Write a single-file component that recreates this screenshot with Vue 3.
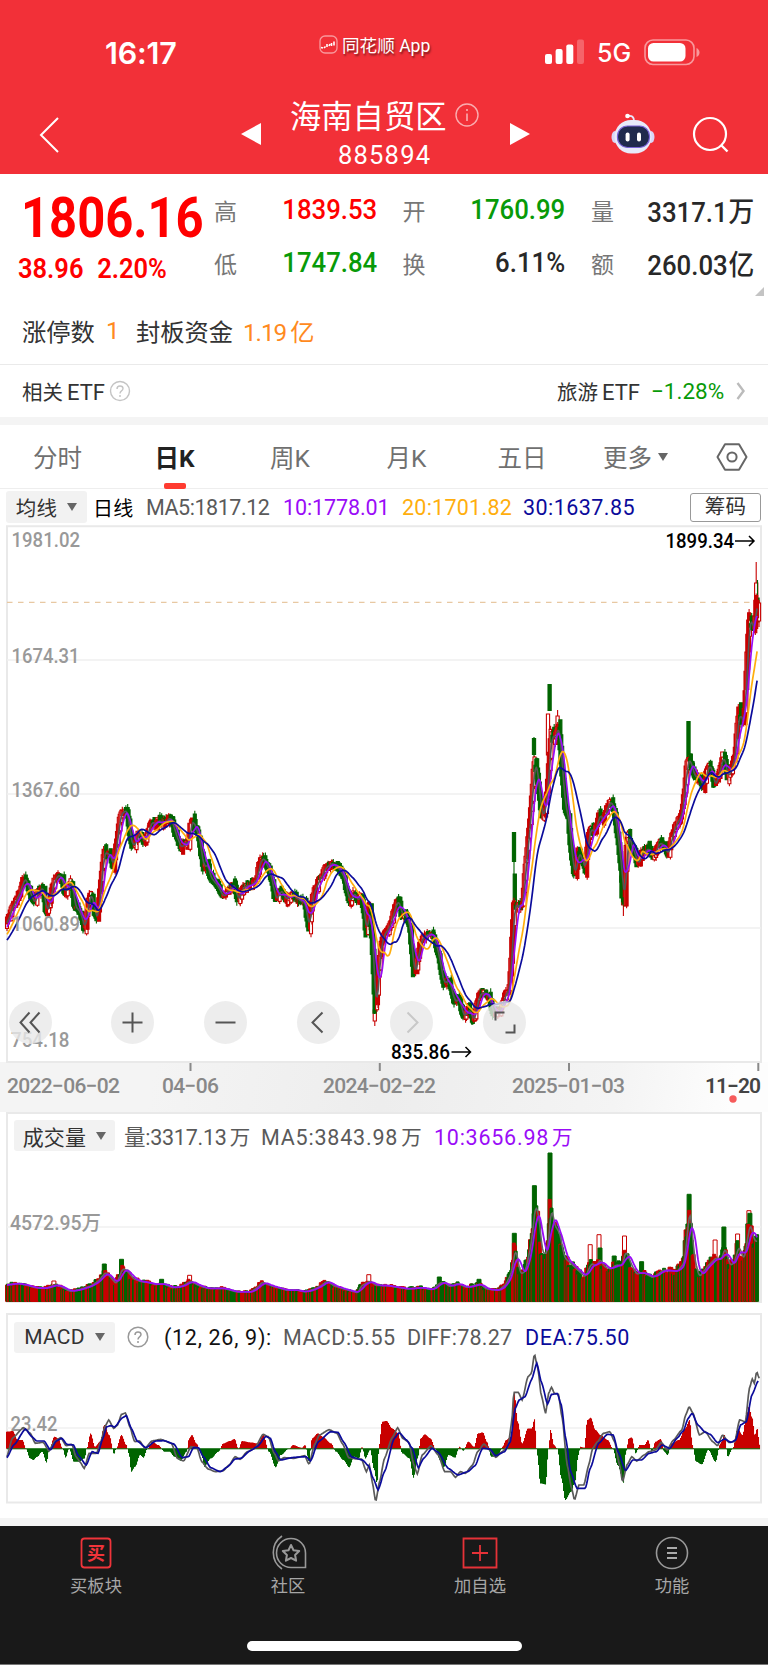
<template>
  <div class="page">
    <header class="header">
      <div class="status-bar">
        <span class="clock">16:17</span>
        <span class="app-mark">
          <svg width="19" height="19" viewBox="0 0 19 19">
            <rect x="1" y="1" width="17" height="17" rx="5" fill="none" stroke="#fff" stroke-opacity=".5" stroke-width="1.3" />
            <path d="M2 12.500l2 .5M5 13l1.500-1.500M8 9v3M10 11l1-2M12.500 8v3M15 6.500v4" fill="none" stroke="#fff" stroke-width="1.600" />
          </svg>
          <span>同花顺 App</span>
        </span>
        <span class="network">
          <svg width="40" height="26" viewBox="0 0 40 26" fill="#fff">
            <rect x="0" y="15" width="7" height="10" rx="2" />
            <rect x="10.600" y="10" width="7" height="15" rx="2" />
            <rect x="21.300" y="5.500" width="7" height="19.500" rx="2" />
            <rect x="32" y="0.500" width="7" height="24.500" rx="2" opacity=".25" />
          </svg>
          <b>5G</b>
          <svg width="56" height="27" viewBox="0 0 56 27">
            <rect x="1" y="1" width="49" height="24.500" rx="8" fill="none" stroke="#fff" stroke-opacity=".5" stroke-width="1.600" />
            <rect x="4" y="4" width="37.500" height="18.500" rx="5.500" fill="#fff" />
            <path d="M52.500 9v9q3-1.500 3-4.500t-3-4.500z" fill="#fff" fill-opacity=".5" />
          </svg>
        </span>
      </div>
      <nav class="title-bar">
        <svg class="back" width="20" height="38" viewBox="0 0 20 38">
          <path d="M19 2L2 19l17 17" fill="none" stroke="#fff" stroke-width="2" />
        </svg>
        <svg class="prev" width="20" height="22" viewBox="0 0 20 22"><path d="M0 11L20 0v22z" fill="#fff" /></svg>
        <div class="title">
          <div class="title-name">
            海南自贸区
            <svg width="24" height="24" viewBox="0 0 24 24">
              <circle cx="12" cy="12" r="11" fill="none" stroke="#fff" stroke-opacity=".6" stroke-width="1.400" />
              <path d="M12 6v2M12 10.500v7.500" stroke="#fff" stroke-opacity=".6" stroke-width="1.600" />
            </svg>
          </div>
          <div class="title-code">885894</div>
        </div>
        <svg class="next" width="20" height="22" viewBox="0 0 20 22"><path d="M20 11L0 0v22z" fill="#fff" /></svg>
        <svg class="robot" width="44" height="42" viewBox="0 0 44 42">
          <path d="M17 3q6-1 6 5" fill="none" stroke="#e9e6fb" stroke-width="1.800" />
          <circle cx="16.500" cy="3" r="2.300" fill="#fff" />
          <ellipse cx="4" cy="24" rx="3.500" ry="6" fill="#d9d6f7" />
          <ellipse cx="40" cy="24" rx="3.500" ry="6" fill="#d9d6f7" />
          <rect x="3.500" y="7" width="37" height="33.500" rx="16.500" fill="#e8eafa" />
          <rect x="6.500" y="13" width="32" height="21.500" rx="10" fill="#202a4d" stroke="#7a63d8" stroke-width="1.200" />
          <rect x="14.600" y="19.500" width="4" height="9" rx="2" fill="#fff" />
          <rect x="26" y="19.500" width="4" height="9" rx="2" fill="#fff" />
        </svg>
        <svg class="search" width="38" height="38" viewBox="0 0 38 38">
          <circle cx="18" cy="18" r="16" fill="none" stroke="#fff" stroke-width="2.200" />
          <path d="M29 29l6.500 6.500" stroke="#fff" stroke-width="2.400" />
        </svg>
      </nav>
    </header>

    <section class="quote">
      <div class="quote-main">
        <div class="price">1806.16</div>
        <div class="change"><span>38.96</span><span>2.20%</span></div>
      </div>
      <div class="quote-grid">
        <div v-for="item in quotes" :key="item.label" class="quote-item">
          <span class="quote-label">{{ item.label }}</span>
          <span :class="['quote-value', item.tone]">{{ item.value }}<i v-if="item.unit">{{ item.unit }}</i></span>
        </div>
      </div>
      <svg class="corner" width="9" height="9" viewBox="0 0 9 9"><path d="M9 0v9H0z" fill="#c4c4c4" /></svg>
      <div class="limit-line">
        <span>涨停数</span><em class="one">1</em><span class="fund">封板资金</span><em class="fund-value">1.19<i>亿</i></em>
      </div>
    </section>

    <section class="etf">
      <span>相关<b>ETF</b></span>
      <svg class="help" width="22" height="22" viewBox="0 0 22 22">
        <circle cx="11" cy="11" r="9.500" fill="none" stroke="#c4c4c4" stroke-width="1.400" />
        <path d="M8 9q0-3 3-3t3 2.600q0 1.300-1.500 2.300T11 13.500M11 15v2" fill="none" stroke="#c4c4c4" stroke-width="1.400" />
      </svg>
      <span class="etf-name">旅游<b>ETF</b></span>
      <span class="etf-rate">−1.28%</span>
      <svg width="10" height="18" viewBox="0 0 10 18"><path d="M1.500 1l6 8-6 8" fill="none" stroke="#bbb" stroke-width="2.400" /></svg>
    </section>

    <nav class="tabs">
      <span v-for="tab in tabs" :key="tab" :class="['tab', { active: tab === activeTab }]" @click="activeTab = tab">
        {{ tab }}<i v-if="tab === '更多'" class="caret"></i>
      </span>
      <svg class="setting" width="32" height="28" viewBox="0 0 32 28">
        <path d="M9 1.300h14L30.500 14 23 26.700H9L1.500 14z" fill="none" stroke="#666" stroke-width="2" stroke-linejoin="round" />
        <circle cx="16" cy="14" r="4.600" fill="none" stroke="#666" stroke-width="2" />
      </svg>
    </nav>

    <div class="ma-row">
      <span class="picker ma-picker">均线<i class="caret"></i></span>
      <span class="ma-day">日线</span>
      <span class="ma5">MA5:1817.12</span>
      <span class="ma10">10:1778.01</span>
      <span class="ma20">20:1701.82</span>
      <span class="ma30">30:1637.85</span>
      <span class="chips">筹码</span>
    </div>

    <section class="kline">
      <svg class="chart" width="768" height="537" viewBox="0 525 768 537">
        <path d="M7 526.300H761V1062H7z" fill="none" stroke="#e9e9e9" stroke-width="2" />
        <path d="M7 660H761M7 794H761M7 928H761" stroke="#f0f0f0" stroke-width="1.500" />
        <path d="M7 602.300H761" stroke="#e8c8a2" stroke-width="1.200" stroke-dasharray="5.500 5.500" />
        <g class="axis">
          <text x="11.500" y="546.500" textLength="68.500" lengthAdjust="spacingAndGlyphs">1981.02</text>
          <text x="11.500" y="662.500" textLength="68" lengthAdjust="spacingAndGlyphs">1674.31</text>
          <text x="11.500" y="796.800" textLength="68.500" lengthAdjust="spacingAndGlyphs">1367.60</text>
        </g>
        <g stroke-width="1.100">
          <path v-for="(c, i) in candles" :key="i" :d="c.d" :fill="c.fill" :stroke="c.stroke" />
        </g>
        <g fill="none" stroke-width="1.700" stroke-linejoin="round">
          <path :d="average(5)" stroke="#555" />
          <path :d="average(10)" stroke="#9a0cf7" />
          <path :d="average(20)" stroke="#ffae0d" />
          <path :d="average(30)" stroke="#0b0b9b" />
        </g>
        <g class="axis">
          <text x="11.500" y="931" textLength="68.500" lengthAdjust="spacingAndGlyphs">1060.89</text>
          <text x="11" y="1047" textLength="58.500" lengthAdjust="spacingAndGlyphs">754.18</text>
        </g>
        <g class="extreme">
          <text x="665.500" y="548" textLength="68.500" lengthAdjust="spacingAndGlyphs">1899.34</text>
          <text x="391" y="1059.300" textLength="59" lengthAdjust="spacingAndGlyphs">835.86</text>
          <path d="M735 541h19M749 536l5 5-5 5M451.500 1052h19M465.500 1047l5 5-5 5" fill="none" stroke="#000" stroke-width="1.500" />
        </g>
      </svg>
      <div class="tools">
        <span v-for="(tool, i) in tools" :key="i" class="tool">
          <svg width="43" height="43" viewBox="-21.500 -21.500 43 43"><path :d="tool.d" fill="none" :stroke="tool.color || '#555'" stroke-width="2" /></svg>
        </span>
      </div>
    </section>

    <div class="dates">
      <svg width="768" height="50" viewBox="0 1062 768 50">
        <path d="M190.500 1062v9M379.800 1062v9M569 1062v9M758.300 1062v9" stroke="#8a8a8a" stroke-width="2" />
        <text v-for="d in dates" :key="d.text" :x="d.x" y="1093.300" :textLength="d.w" :class="{ current: d.current }">{{ d.text }}</text>
        <circle cx="733" cy="1099" r="3.700" fill="#f65b5b" />
      </svg>
    </div>

    <section class="sub volume">
      <div class="sub-head">
        <span class="picker">成交量<i class="caret"></i></span>
        <span class="v0">量:3317.13<u>万</u></span>
        <span class="v5">MA5:3843.98<u>万</u></span>
        <span class="v10">10:3656.98<u>万</u></span>
      </div>
      <svg class="chart" width="768" height="191" viewBox="0 1112 768 191">
        <path d="M7 1113H761V1302H7z" fill="none" stroke="#e9e9e9" stroke-width="2" />
        <path d="M7 1227H761" stroke="#f0f0f0" stroke-width="1.500" />
        <text class="axis" x="10" y="1229.500" textLength="91" lengthAdjust="spacingAndGlyphs">4572.95万</text>
        <g stroke-width="1">
          <path v-for="(b, i) in volumeBars" :key="i" :d="b.d" :fill="b.fill" :stroke="b.stroke" />
        </g>
        <path :d="volumeAverage(4)" fill="none" stroke="#666" stroke-width="1.600" />
        <path :d="volumeAverage(9)" fill="none" stroke="#9a0cf7" stroke-width="1.800" />
      </svg>
    </section>

    <section class="sub macd">
      <div class="sub-head">
        <span class="picker">MACD<i class="caret"></i></span>
        <svg class="macd-help" width="22" height="22" viewBox="0 0 22 22">
          <circle cx="11" cy="11" r="9.800" fill="none" stroke="#999" stroke-width="1.500" />
          <path d="M8 9q0-3 3-3t3 2.600q0 1.300-1.500 2.300T11 13.500M11 15v2" fill="none" stroke="#999" stroke-width="1.500" />
        </svg>
        <span class="m0">(12, 26, 9):</span>
        <span class="m1">MACD:5.55</span>
        <span class="m2">DIFF:78.27</span>
        <span class="m3">DEA:75.50</span>
      </div>
      <svg class="chart" width="768" height="191" viewBox="0 1313 768 191">
        <path d="M7 1314H761V1502.500H7z" fill="none" stroke="#e9e9e9" stroke-width="2" />
        <path d="M7 1428H761" stroke="#f0f0f0" stroke-width="1.500" />
        <text class="axis" x="10.500" y="1430.500" textLength="47" lengthAdjust="spacingAndGlyphs">23.42</text>
        <path :d="histogram(1)" fill="#c80000" />
        <path :d="histogram(-1)" fill="#006400" />
        <path d="M7 1448.800H760" stroke="#006400" stroke-width="1" />
        <path :d="curve(diff)" fill="none" stroke="#5a5a5a" stroke-width="1.700" />
        <path :d="curve(dea)" fill="none" stroke="#0b0b9b" stroke-width="1.700" />
      </svg>
    </section>

    <footer class="footer">
      <div class="actions">
        <div class="action">
          <svg width="36" height="36" viewBox="-18 -18 36 36">
            <rect x="-14.500" y="-14.500" width="29" height="29" rx="3" fill="none" stroke="#f0343a" stroke-width="1.800" />
            <text x="0" y="6.500" text-anchor="middle" class="buy">买</text>
          </svg>
          <span>买板块</span>
        </div>
        <div class="action">
          <svg width="38" height="36" viewBox="-19 -18 38 36" fill="none" stroke="#999" stroke-width="1.600">
            <path d="M3 -14.500a14.500 14.500 0 0 0 0 29h14.500v-14.500A14.500 14.500 0 0 0 3 -14.500z" />
            <path d="M-6 -17a20 20 0 0 0 0 33" />
            <path d="M3 -8l2.500 5.200 5.700.8-4.100 4 1 5.700L3 5l-5.100 2.700 1-5.700-4.100-4 5.700-.8z" stroke-width="2" stroke-linejoin="round" />
          </svg>
          <span>社区</span>
        </div>
        <div class="action">
          <svg width="36" height="36" viewBox="-18 -18 36 36">
            <path d="M-16.500 -14.500h33v29h-33zM-8 0H8M0 -8V8" fill="none" stroke="#e63238" stroke-width="1.800" />
          </svg>
          <span>加自选</span>
        </div>
        <div class="action">
          <svg width="36" height="36" viewBox="-18 -18 36 36">
            <circle r="15.500" fill="none" stroke="#999" stroke-width="1.600" />
            <path d="M-5 -5H5M-5 0H5M-5 5H5" stroke="#aaa" stroke-width="1.800" />
          </svg>
          <span>功能</span>
        </div>
      </div>
      <div class="home-bar"></div>
    </footer>
  </div>
</template>

<script setup>
import { ref } from 'vue';

const quotes = [
  { label: '高', value: '1839.53', tone: 'up' },
  { label: '开', value: '1760.99', tone: 'down' },
  { label: '量', value: '3317.1', unit: '万' },
  { label: '低', value: '1747.84', tone: 'down' },
  { label: '换', value: '6.11%' },
  { label: '额', value: '260.03', unit: '亿' },
];

const tabs = ['分时', '日K', '周K', '月K', '五日', '更多'];
const activeTab = ref('日K');

const tools = [
  { d: 'M-1 -10L-10 0L-1 10M9 -10L0 0L9 10' },
  { d: 'M-10 0H10M0 -10V10' },
  { d: 'M-10 0H10' },
  { d: 'M4 -10L-6 0L4 10' },
  { d: 'M-4 -10L6 0L-4 10', color: '#c8c8c8' },
  { d: 'M-9 -2V-10H0M10 2V10H1' },
];

const dates = [
  { text: '2022−06−02', x: 7, w: 113 },
  { text: '04−06', x: 162, w: 57 },
  { text: '2024−02−22', x: 323, w: 113 },
  { text: '2025−01−03', x: 512, w: 113 },
  { text: '11−20', x: 705, w: 56, current: true },
];

const DAYS = 840;
const WARMUP = 30;
const STEP = 751 / DAYS;
const RED = '#c80000';
const GREEN = '#006400';

let seed = 7;
const random = () => {
  seed = (seed * 16807) % 2147483647;
  return seed / 2147483647;
};

const interpolate = (points, x, smooth) => {
  if (x <= points[0][0]) return points[0][1];
  for (let i = 1; i < points.length; i++) {
    const [x1, y1] = points[i];
    if (x <= x1) {
      const [x0, y0] = points[i - 1];
      let t = (x - x0) / (x1 - x0);
      if (smooth) t = t * t * (3 - 2 * t);
      return y0 + (y1 - y0) * t;
    }
  }
  return points[points.length - 1][1];
};

const pairs = (text) => text.trim().split(/\s+/).map((p) => p.split(',').map(Number));

// Points de passage des clôtures (moitié gauche puis moitié droite)
const left = pairs(`
  -80,1190 -50,1170 -20,1145 5,1105 20,1080 33,1050 45,1025 58,1005 68,968 80,985 90,1020 103,1038 110,1003 127,992
  135,1062 145,1040 155,985 165,968 176,960 185,978 192,1015 200,985 212,975 220,1050 230,1050 240,1068 252,1112
  262,1025 274,1010 280,1060 290,1085 297,1000 305,930 312,890 320,908 328,900 337,940 345,880 352,840 358,795
  367,787 378,787 385,840 393,880 405,873 413,840 420,852 428,873 440,845 453,815 463,825 475,808 485,820 505,805
  515,825 527,860 540,888 550,870 562,880 567,830 575,808 583,840 593,850 602,910 608,948 618,930 628,965 640,975
  655,1000 667,1017 680,1000 700,985 712,1032 725,990 740,987 755,985 768,970 775,925 787,915 800,940 812,970
  820,1018 827,1026 840,997 855,1026 875,1013 895,1028 912,1033 918,1075 925,1105 930,1040 940,1003 950,983 962,960
  975,940 990,932 1005,935 1020,950 1030,965 1038,1010 1047,1033 1058,1008 1070,1033 1080,1015 1088,1050 1097,1130
  1103,1060 1106,1020 1110,1090 1116,1180 1121,1290 1124,1345 1130,1260 1134,1200 1140,1150 1150,1115`);
const right = pairs(`
  5,1110 20,1080 32,1040 41,1025 50,1070 62,1070 75,1095 82,1180 87,1235 97,1190 107,1140 120,1122 140,1117
  152,1145 162,1180 170,1230 177,1262 187,1240 197,1260 208,1308 222,1290 235,1345 250,1320 266,1355 275,1310
  285,1278 297,1278 312,1288 325,1335 340,1332 352,1310 362,1275 372,1280 378,1210 383,1100 388,1030 395,1050
  405,1040 413,1050 420,950 430,860 440,760 447,670 451,645 455,680 463,740 470,805 480,785 487,730 493,640 500,570
  507,600 515,570 521,550 528,640 540,780 550,800 557,880 565,940 571,967 580,890 590,920 602,948 608,870 617,833
  630,848 643,795 655,810 665,780 677,763 688,790 700,870 710,950 716,1030 720,1035 724,890 730,845 740,885 750,900
  758,932 770,900 790,888 805,910 823,868 835,882 850,908 862,850 875,820 890,800 898,740 905,665 914,640 918,665
  930,700 940,692 955,722 965,682 975,662 990,722 1000,690 1015,633 1028,700 1040,665 1050,640 1057,555 1063,510
  1070,550 1078,540 1083,440 1088,345 1094,250 1102,300 1110,280 1115,200 1118,210 1123,240 1130,250`);
const price = [
  ...left.map(([x, y]) => [x / 3, 520 + y / 2.703]),
  ...right.map(([x, y]) => [384 + x / 3, 520 + y / 2.703]),
];

const closes = [];
for (let i = -WARMUP; i < DAYS; i++) {
  const x = 7 + i * STEP;
  closes.push({ x, y: interpolate(price, x) + (random() - 0.5) * 4 });
}

const box = (x, top, bottom, w = 3) => `M${x.toFixed(1)} ${top.toFixed(1)}h${w}V${bottom.toFixed(1)}h-${w}z`;

const candles = closes.slice(WARMUP).map(({ x, y }, i) => {
  const back = closes[WARMUP + i - 3].y + (random() - 0.5) * 9;
  const top = Math.min(y, back) - 1.2;
  const bottom = Math.max(y, back) + 1.2;
  const wick = random() * 4;
  const up = y < back;
  const d = `M${x.toFixed(1)} ${(top - wick).toFixed(1)}V${top.toFixed(1)}M${x.toFixed(1)} ${bottom.toFixed(1)}v${(4 - wick).toFixed(1)}`;
  return {
    fill: up ? (random() < 0.45 ? RED : '#fff') : GREEN,
    stroke: up ? RED : GREEN,
    d: d + box(x - 1.5, top, bottom),
  };
});

// Séances exceptionnelles
const gaps = [
  [374.800, 1010, 1021, true, 1005, 1026], [514, 832.500, 861.500, false, 862, 905], [514.800, 874, 900, false, 874, 920],
  [534, 738.500, 754.500, false, 737, 760], [548, 714, 755, true, 714, 755], [549.600, 684.500, 710.500, false, 684, 710],
  [557.600, 716, 740, true, 710, 745], [621.500, 876, 898, false, 870, 905], [623.400, 890, 905, true, 880, 916],
  [688.500, 721.500, 759.500, false, 721, 760], [756.200, 583, 600, true, 562, 610], [757.500, 598, 622, false, 580, 625],
  [759, 603, 621, true, 600, 627],
];
gaps.forEach(([x, top, bottom, up, high, low]) => {
  const day = Math.min(DAYS, Math.round((x - 7) / STEP));
  candles.splice(day, 0, {
    fill: up ? '#fff' : GREEN,
    stroke: up ? RED : GREEN,
    d: `M${x} ${high}V${top}M${x} ${bottom}V${low}${box(x - 1.6, top, bottom, 3.2)}`,
  });
});

const toPath = (points) => points.map(([x, y], i) => `${i ? 'L' : 'M'}${x.toFixed(1)} ${y.toFixed(1)}`).join('');

const average = (n) => {
  const points = [];
  for (let i = WARMUP; i < closes.length; i++) {
    let sum = 0;
    for (let k = 0; k < n; k++) sum += closes[i - k].y;
    points.push([closes[i].x, sum / n]);
  }
  return toPath(points);
};

const UNIT = 768 / 1568;

const volumeTop = pairs(`
  12,668 30,663 50,668 70,678 90,680 110,668 120,672 140,690 160,684 185,670 200,652 213,625 222,640 235,665
  248,612 258,622 270,647 285,657 300,660 315,667 330,664 350,678 370,672 387,655 400,668 420,680 455,680 480,692
  510,692 525,674 533,658 545,668 565,678 585,687 600,685 620,692 640,682 655,668 665,655 680,672 700,682 728,695
  735,672 753,655 765,670 785,670 800,674 830,682 858,677 880,685 897,660 905,660 915,674 932,663 950,677 978,665
  990,682 1015,687 1030,667 1042,625 1050,540 1060,632 1070,622 1082,530 1091,390 1098,440 1105,560 1115,560
  1120,460 1123,400 1130,465 1140,490 1150,575 1165,598 1180,622 1192,642 1205,595 1215,604 1223,580 1232,607
  1245,614 1255,600 1268,603 1275,550 1285,592 1297,632 1310,625 1330,643 1352,618 1368,620 1380,622 1395,592
  1403,450 1407,410 1415,575 1425,642 1440,608 1460,575 1470,584 1478,540 1488,603 1497,592 1506,535 1517,584
  1529,455 1538,520 1547,518 1553,556`);
const volumes = closes.slice(WARMUP - 10).map(({ x }) => [x, 1060 + interpolate(volumeTop, x / UNIT) / 3]);

const volumeBars = [];
for (let i = 0; i < DAYS; i++) {
  const [x, y] = volumes[i + 10];
  const color = random() < 0.54 ? RED : GREEN;
  volumeBars.push({
    d: box(x - 1.5, Math.min(1298, y + random() * (1301 - y) * 0.25), 1301.3),
    fill: color,
    stroke: color,
  });
}
const peaks = [
  [213, 612, false], [248, 598, false], [110, 663, true], [387, 646, true], [753, 644, true], [1050, 520, false],
  [1091, 377, false], [1123, 279, false], [1205, 554, true], [1223, 524, true], [1225, 564, false], [1275, 528, true],
  [1254, 588, false], [1310, 605, false], [1407, 403, false], [1460, 540, true], [1478, 501, false],
  [1506, 522, true], [1529, 452, true], [1531, 460, false], [897, 651, false], [978, 658, false], [330, 658, false],
];
peaks.forEach(([x, y, up]) => {
  const at = Math.round((x * UNIT - 7) / STEP);
  volumeBars.splice(at, 0, {
    d: box(x * UNIT - 2, 1060 + y / 3, 1301.3, 4),
    fill: up ? '#fff' : GREEN,
    stroke: up ? RED : GREEN,
  });
});

const volumeAverage = (n) => {
  const points = [];
  for (let i = 10; i < volumes.length; i++) {
    let sum = 0;
    for (let k = 0; k < n; k++) sum += volumes[i - k][1];
    points.push([volumes[i][0], sum / n + (1301 - sum / n) * 0.12]);
  }
  return toPath(points);
};

const macd = pairs(`
  12,380 25,378 35,405 45,405 52,431 60,460 67,465 75,455 85,440 94,472 100,431 110,395 118,400 127,431 133,458
  140,431 150,470 160,470 172,460 176,431 184,385 193,425 203,410 212,360 222,390 232,447 236,431 247,390 257,420
  262,445 267,500 275,485 285,450 292,458 300,431 310,410 322,420 335,440 345,440 355,455 368,467 380,440 385,400
  391,390 400,415 410,445 416,485 430,460 445,440 455,415 468,408 478,402 486,432 493,408 510,412 525,415 537,390
  548,440 562,487 572,450 590,430 597,420 615,428 622,420 630,470 636,400 648,385 658,395 675,415 685,440 700,465
  712,487 722,455 732,460 738,425 745,460 755,435 762,490 769,535 773,420 779,350 788,348 800,370 812,385 820,445
  835,460 843,518 852,460 858,400 866,388 878,400 888,431 897,465 905,487 915,450 928,458 937,425 945,437 955,410
  967,425 975,385 985,382 993,410 1002,455 1015,455 1025,425 1032,405 1042,395 1049,260 1056,350 1065,415 1077,370
  1085,370 1090,342 1096,450 1102,535 1113,538 1119,431 1123,375 1130,420 1137,431 1145,520 1153,585 1165,560
  1173,530 1180,450 1184,425 1192,428 1198,345 1205,338 1215,375 1225,390 1240,405 1250,430 1260,480 1272,533
  1277,440 1283,400 1289,397 1297,445 1305,420 1315,420 1322,405 1330,440 1337,410 1348,402 1355,440 1362,450
  1370,415 1385,405 1398,370 1407,345 1413,420 1420,470 1432,478 1445,435 1460,470 1470,415 1478,390 1485,455
  1495,430 1505,370 1515,390 1522,340 1528,305 1535,340 1540,390 1545,370 1550,420`);
const diff = pairs(`
  14,455 25,400 48,368 62,385 72,415 88,412 100,438 112,408 124,398 135,422 147,418 155,455 163,470 172,490
  182,445 197,445 206,410 214,365 222,345 232,370 240,360 248,328 256,324 265,365 275,410 285,408 296,430 310,408
  328,403 350,415 362,460 375,468 390,425 402,428 412,470 425,492 440,500 455,498 468,480 480,455 490,463 505,440
  520,430 537,388 548,395 560,445 568,468 580,458 600,460 622,452 631,478 642,420 652,390 672,374 688,385 700,418
  712,458 728,462 738,462 748,500 754,480 760,530 767,590 775,530 785,460 800,400 812,368 822,400 835,412 845,480
  852,507 862,450 880,422 895,450 908,500 920,500 930,517 940,500 950,505 965,480 975,440 988,417 1000,435
  1012,457 1025,440 1037,425 1045,350 1049,262 1058,262 1066,285 1078,215 1085,205 1091,147 1098,190 1105,270
  1114,325 1120,265 1126,247 1132,265 1140,268 1148,340 1158,480 1167,550 1173,585 1182,540 1192,540 1202,480
  1210,430 1220,410 1232,385 1245,380 1255,410 1265,480 1271,530 1280,480 1290,455 1300,468 1315,450 1325,440
  1338,435 1350,412 1362,435 1375,405 1392,375 1400,330 1407,305 1415,325 1428,390 1440,380 1455,410 1465,422
  1475,390 1488,412 1500,410 1510,345 1522,350 1530,250 1536,222 1540,235 1545,200 1550,220`);
const dea = pairs(`
  14,458 28,420 52,372 65,395 75,408 90,408 103,435 115,408 126,400 137,418 150,420 160,452 176,480 188,440
  200,445 210,400 218,365 226,362 234,366 250,338 258,332 268,370 280,408 298,428 318,408 335,407 355,417 372,458
  385,455 395,428 405,428 415,455 430,488 450,500 465,485 480,462 492,460 510,438 525,425 543,394 552,400 562,440
  573,465 600,457 625,455 634,468 650,410 675,380 690,382 702,412 718,456 740,465 752,482 762,520 772,555 785,500
  805,400 815,383 830,405 842,430 854,488 865,460 882,430 895,442 915,490 935,510 955,500 970,482 985,430
  1000,432 1012,452 1030,440 1042,410 1052,310 1060,285 1072,275 1085,225 1096,175 1105,230 1118,297 1126,268
  1138,266 1146,300 1155,400 1165,500 1178,550 1195,550 1205,490 1222,415 1240,388 1252,390 1262,440 1277,497
  1292,465 1310,465 1325,445 1340,440 1352,420 1368,430 1382,400 1395,378 1405,340 1413,325 1425,360 1440,382
  1450,388 1465,413 1480,402 1492,412 1502,405 1512,360 1524,350 1535,270 1548,228`);

const curve = (points) => {
  const sampled = [];
  for (let x = 14; x <= points[points.length - 1][0]; x += 2) {
    const y = (interpolate(points, x, true) + interpolate(points, x)) / 2;
    sampled.push([x * UNIT, 1305 + y / 3]);
  }
  return toPath(sampled);
};

const histogram = (sign) => {
  let d = '';
  for (let x = 6; x < 760; x++) {
    const h = (431 - interpolate(macd, x / UNIT, true)) / 3;
    if (h * sign > 0) d += `M${x} 1448.700h1.050v${(-h).toFixed(1)}h-1.050z`;
  }
  return d;
};
</script>

<style>
body {
  background: #fff;
}
</style>

<style scoped>
.page {
  width: 768px;
  height: 1665px;
  overflow: hidden;
  background: #fff;
  color: #333;
  font-family: Roboto, "Noto Sans CJK SC", sans-serif;
}

.page svg {
  display: block;
  flex: none;
}

.chart {
  overflow: visible;
}

i, em, u {
  font-style: normal;
  text-decoration: none;
}

.header {
  height: 174px;
  background: #f23038;
  color: #fff;
}

.status-bar {
  display: flex;
  height: 104px;
}

.clock {
  width: 214px;
  padding: 35px 0 0 105px;
  font: 600 30.500px/36px Inter, sans-serif;
  letter-spacing: -0.200px;
}

.app-mark {
  display: flex;
  align-items: center;
  gap: 4px;
  width: 226px;
  height: 24px;
  margin-top: 32px;
  font-size: 17.600px;
  white-space: nowrap;
  text-shadow: 1px 2px 2px rgba(0, 0, 0, 0.5);
}

.network {
  display: flex;
  align-items: center;
  height: 28px;
  margin-top: 38px;
}

.network b {
  width: 34px;
  margin: 2px 13px 0 12px;
  font: 500 25px/28px Inter, sans-serif;
}

.title-bar {
  display: flex;
  align-items: flex-start;
  height: 70px;
}

.back {
  margin: 12px 0 0 39px;
}

.prev {
  margin: 19px 0 0 182px;
}

.title {
  width: 190px;
  margin: -12px 30px 0 29px;
}

.title-name {
  display: flex;
  align-items: center;
  gap: 8px;
  height: 45px;
  font-size: 31.300px;
  white-space: nowrap;
}

.title-code {
  margin: 3px 0 0 48px;
  font-size: 25.500px;
  line-height: 30px;
  letter-spacing: 1.200px;
}

.next {
  margin: 19px 0 0 0;
}

.robot {
  margin: 9px 0 0 81px;
}

.search {
  margin: 12px 0 0 37px;
}

.quote {
  position: relative;
  display: grid;
  grid-template-columns: 214px 540px;
  height: 190px;
  border-bottom: 1px solid #eaeaea;
}

.price {
  width: 190px;
  margin: 12px 0 0 21px;
  color: #ff0000;
  font-size: 55px;
  font-weight: 700;
  line-height: 64px;
  transform: scaleX(0.89);
  transform-origin: left;
}

.change {
  display: flex;
  gap: 15px;
  margin: 2px 0 0 18px;
  color: #ff0000;
  font-size: 28px;
  font-weight: 600;
  line-height: 34px;
  transform: scaleX(0.91);
  transform-origin: left;
}

.quote-grid {
  display: grid;
  grid-template-columns: 163px 163px 163px;
  grid-template-rows: 53px 53px;
  column-gap: 25.500px;
  padding-top: 9px;
}

.quote-item {
  display: flex;
  justify-content: space-between;
  align-items: center;
  white-space: nowrap;
}

.quote-label {
  color: #777;
  font-size: 23px;
}

.quote-value {
  color: #282828;
  font-size: 28px;
  font-weight: 500;
  transform: scaleX(0.92);
  transform-origin: right;
}

.quote-value i {
  margin-left: 1px;
  font-size: 28px;
}

.quote .up {
  color: #ff0000;
}

.quote .down {
  color: #089a08;
}

.corner {
  position: absolute;
  right: 4px;
  top: 113px;
}

.limit-line {
  display: flex;
  grid-column: 1 / 3;
  align-items: center;
  height: 34px;
  padding: 8px 0 0 22px;
  font-size: 24.300px;
  white-space: nowrap;
}

.limit-line em {
  color: #ff8a1e;
  font-size: 24.300px;
}

.limit-line .one {
  width: 30px;
  padding-left: 11px;
  box-sizing: border-box;
  margin-right: 11px;
}

.limit-line .fund {
  width: 107px;
}

.limit-line .fund-value {
  letter-spacing: -1px;
}

.limit-line i {
  margin-left: 4px;
}

.etf {
  display: flex;
  align-items: center;
  height: 52px;
  padding: 0 22px;
  font-size: 20.500px;
  border-bottom: 8px solid #f4f4f4;
}

.etf b {
  margin-left: 4px;
  font-size: 22px;
  font-weight: 400;
}

.help {
  margin-left: 4px;
}

.etf-name {
  margin-left: auto;
}

.etf-rate {
  width: 75px;
  margin: 0 10px 0 11px;
  color: #089a08;
  font-size: 22.500px;
}

.tabs {
  display: grid;
  grid-template-columns: 115px 119px 112px 121px 110px 117px 74px;
  align-items: center;
  height: 64px;
  border-bottom: 1px solid #eee;
  box-sizing: border-box;
  color: #707070;
  font-size: 24.500px;
  white-space: nowrap;
}

.tab {
  position: relative;
  display: flex;
  justify-content: center;
  align-items: center;
  height: 63px;
  cursor: pointer;
}

.tab .caret {
  margin-left: 6px;
}

.active {
  color: #222;
  font-weight: 700;
}

.active::after {
  content: "";
  position: absolute;
  bottom: -1px;
  width: 22px;
  height: 6px;
  border-radius: 2px;
  background: #ff3b30;
}

.setting {
  margin-left: 22px;
}

.caret {
  flex: none;
  width: 0;
  height: 0;
  border: 5.500px solid transparent;
  border-top: 8px solid #666;
  border-bottom: 0;
}

.picker {
  display: flex;
  align-items: center;
  justify-content: center;
  gap: 10px;
  width: 101px;
  height: 31px;
  border-radius: 3px;
  background: #f2f2f2;
  color: #333;
}

.ma-row,
.sub-head {
  display: flex;
  align-items: center;
  height: 36px;
  font-size: 21.500px;
  white-space: nowrap;
  letter-spacing: 0.250px;
}

.ma-row .picker {
  width: 81px;
  height: 32px;
  margin: 0 6px;
  font-size: 20.500px;
}

.ma-day {
  width: 53px;
  color: #000;
  font-size: 20px;
}

.ma5 {
  width: 137px;
  color: #5a5a5a;
  letter-spacing: -0.450px;
}

.ma10 {
  width: 119px;
  color: #9a0cf7;
  letter-spacing: -0.100px;
}

.ma20 {
  width: 121px;
  color: #ffae0d;
}

.ma30 {
  width: 167px;
  color: #0b0b9b;
  letter-spacing: 0.450px;
}

.chips {
  width: 69px;
  height: 27px;
  border: 1px solid #999;
  border-radius: 3px;
  font-size: 20.500px;
  line-height: 27px;
  text-align: center;
}

.kline {
  position: relative;
  height: 537px;
}

.axis {
  fill: #999;
  font-size: 20.500px;
  font-weight: 500;
}

.extreme {
  font-size: 20.500px;
  font-weight: 500;
  fill: #000;
}

.tools {
  position: absolute;
  left: 9px;
  top: 476px;
  display: flex;
  gap: 50px;
}

.tool {
  width: 43px;
  height: 43px;
  border-radius: 50%;
  background: rgba(232, 232, 232, 0.8);
}

.tool:first-child {
  margin-right: 8.500px;
}

.dates {
  height: 50px;
  background: linear-gradient(100deg, #f4f4f4 20%, #ededed 50%, #f4f4f4 80%, #fdfdfd 95%);
}

.dates text {
  fill: #888;
  font-size: 21px;
  font-weight: 500;
}

.dates .current {
  fill: #444;
  font-weight: 600;
}

.sub {
  position: relative;
  height: 191px;
  margin-bottom: 10px;
}

.sub .chart {
  position: absolute;
  left: 0;
  top: 0;
}

.sub-head {
  position: relative;
  z-index: 1;
  height: 47px;
  padding-left: 14px;
  color: #5a5a5a;
}

.sub-head .picker {
  font-size: 21px;
}

.sub-head u {
  margin-left: 3px;
  font-size: 20.500px;
}

.v0 {
  width: 137px;
  margin-left: 9px;
  letter-spacing: -0.250px;
}

.v5 {
  width: 173px;
  letter-spacing: 0.800px;
}

.v10 {
  color: #9a0cf7;
  letter-spacing: 0.750px;
}

.macd .sub-head {
  height: 48px;
}

.macd-help {
  margin: 0 15px 0 12px;
}

.m0 {
  width: 119px;
  color: #111;
  letter-spacing: 0.700px;
}

.m1 {
  width: 124px;
  letter-spacing: 0.500px;
}

.m2 {
  width: 118px;
}

.m3 {
  color: #0b0b9b;
  letter-spacing: 0.600px;
}

.footer {
  height: 138px;
  margin-top: 14px;
  border-top: 8px solid #f4f4f4;
  border-bottom: 1px solid #777;
  background: #191919;
  background-clip: padding-box;
}

.actions {
  display: grid;
  grid-template-columns: repeat(4, 1fr);
  padding-top: 9px;
}

.action {
  display: flex;
  flex-direction: column;
  align-items: center;
  gap: 2px;
  color: #a6a6a6;
  font-size: 17.300px;
  line-height: 26px;
}

.buy {
  fill: #f0343a;
  font-size: 18px;
  font-weight: 700;
}

.home-bar {
  width: 275px;
  height: 10px;
  margin: 42px auto 0;
  border-radius: 5px;
  background: #fff;
}
</style>
